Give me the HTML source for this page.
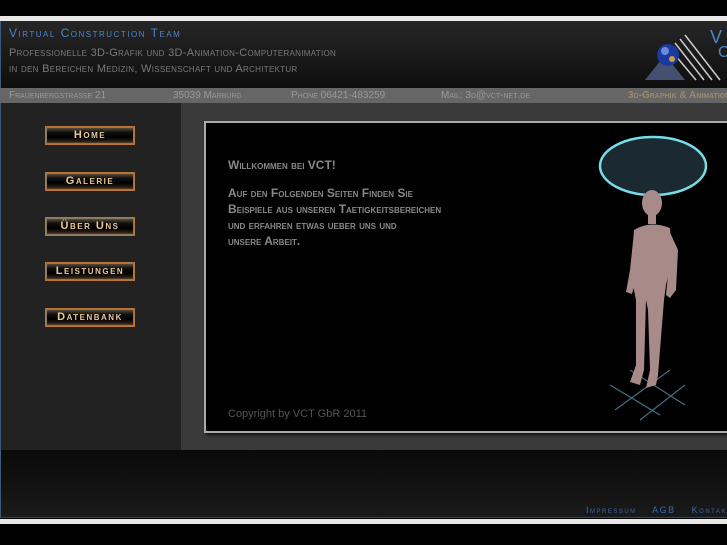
<!DOCTYPE html>
<html><head><meta charset="utf-8"><style>
*{margin:0;padding:0;box-sizing:border-box}
body{width:727px;height:545px;background:#000;position:relative;overflow:hidden;font-family:"Liberation Sans",sans-serif}
.a{position:absolute}
.sc{font-variant:small-caps}
.btn{position:absolute;left:45px;width:90px;height:19px;border:1px solid #b8743a;background:linear-gradient(#6a5a48,#111 30%,#000 60%,#2a2015 85%,#7a5a30);color:#e8c898;font-size:11px;font-weight:bold;text-align:center;line-height:16px;letter-spacing:1.5px;font-variant:small-caps;box-shadow:inset 0 0 0 1px #8a7a60}
</style></head><body>
<div class="a" style="left:0;top:16px;width:727px;height:5px;background:#e8e8e8"></div>
<div class="a" style="left:0;top:21px;width:727px;height:67px;background:linear-gradient(#262626,#0e0e0e);border-left:1px solid #3a5a7a"></div>
<div class="a sc" style="left:9px;top:26px;font-size:12px;color:#4a86c8;letter-spacing:1.5px">Virtual Construction Team</div>
<div class="a sc" style="left:9px;top:47px;font-size:11px;color:#7a7a7a;letter-spacing:0.3px">Professionelle 3D-Grafik und 3D-Animation-Computeranimation</div>
<div class="a sc" style="left:9px;top:63px;font-size:11px;color:#7a7a7a;letter-spacing:0.3px">in den Bereichen Medizin, Wissenschaft und Architektur</div>
<svg class="a" style="left:640px;top:25px" width="87" height="58">
<g stroke="#ccc" stroke-width="1.5"><line x1="45" y1="10" x2="80" y2="55"/><line x1="40" y1="14" x2="72" y2="55"/><line x1="35" y1="18" x2="64" y2="55"/><line x1="30" y1="24" x2="56" y2="55"/></g>
<polygon points="5,55 25,30 45,55" fill="#5a6a9a" opacity=".7"/>
<circle cx="28" cy="30" r="11" fill="#1a3aa0"/><circle cx="25" cy="26" r="4" fill="#6a8ae0"/><circle cx="32" cy="34" r="3" fill="#c8a040"/>
<text x="70" y="18" fill="#4a86c8" font-size="18" font-family="Liberation Sans">V</text>
<text x="78" y="32" fill="#4a86c8" font-size="16" font-family="Liberation Sans">C</text>
</svg>
<div class="a sc" style="left:0;top:88px;width:727px;height:15px;background:#666;color:#999;font-size:10px;line-height:15px;white-space:nowrap">
<span class="a" style="left:9px">Frauenbergstrasse 21</span><span class="a" style="left:173px">35039 Marburg</span><span class="a" style="left:291px">Phone 06421-483259</span><span class="a" style="left:441px">Mail: 3d@vct-net.de</span><span class="a" style="left:628px;font-weight:bold;color:#9a8a6a">3d-Graphik &amp; Animation</span></div>
<div class="a" style="left:0;top:103px;width:181px;height:347px;background:#222;border-left:1px solid #3a5a7a"></div>
<div class="a" style="left:181px;top:103px;width:546px;height:347px;background:#3a3a3a"></div>
<div class="btn" style="top:126px">Home</div>
<div class="btn" style="top:172px">Galerie</div>
<div class="btn" style="top:217px">Über Uns</div>
<div class="btn" style="top:262px">Leistungen</div>
<div class="btn" style="top:308px">Datenbank</div>
<div class="a" style="left:204px;top:121px;width:530px;height:312px;background:#000;border:2px solid #aaa;box-shadow:2px 2px 3px #111"></div>
<div class="a sc" style="left:228px;top:158px;font-size:12px;font-weight:bold;color:#888">Willkommen bei VCT!</div>
<div class="a sc" style="left:228px;top:185px;font-size:12px;font-weight:bold;color:#888;line-height:16px;width:260px">Auf den Folgenden Seiten Finden Sie<br>Beispiele aus unseren Taetigkeitsbereichen<br>und erfahren etwas ueber uns und<br>unsere Arbeit.</div>
<div class="a" style="left:228px;top:408px;font-size:11px;color:#555">Copyright by VCT GbR 2011</div>
<svg class="a" style="left:560px;top:120px" width="167" height="310">
<g stroke="#5a8aa0" stroke-width="1.2" opacity=".8"><line x1="50" y1="265" x2="100" y2="295"/><line x1="70" y1="250" x2="125" y2="285"/><line x1="55" y1="290" x2="110" y2="250"/><line x1="80" y1="300" x2="125" y2="265"/></g>
<ellipse cx="93" cy="46" rx="53" ry="29" fill="#1a2a30" stroke="#7adbe8" stroke-width="2.5"/>
<g fill="#a88a88"><ellipse cx="92" cy="83" rx="10" ry="13"/><rect x="88" y="94" width="8" height="10"/>
<path d="M74 110 Q90 100 110 108 L112 140 L106 165 L104 180 L100 230 L98 255 L96 265 L86 268 L90 250 L88 190 L86 180 L84 250 L80 265 L70 262 L76 245 L76 180 L72 160 Z"/>
<path d="M108 108 L118 130 L116 170 L110 178 L106 175 L110 135 Z"/><path d="M74 112 L70 150 L66 172 L72 174 L78 150 Z"/></g>
</svg>
<div class="a" style="left:0;top:450px;width:727px;height:68px;background:linear-gradient(#0a0a0a,#1a1a1a);border-left:1px solid #3a5a7a;border-bottom:1px solid #2a4a6a"></div>
<div class="a sc" style="left:586px;top:505px;font-size:9px;color:#3a6aaa;letter-spacing:1.5px;white-space:nowrap">Impressum &nbsp;&nbsp; AGB &nbsp;&nbsp; Kontakt</div>
<div class="a" style="left:0;top:519px;width:727px;height:5px;background:#e8e8e8"></div>
</body></html>
